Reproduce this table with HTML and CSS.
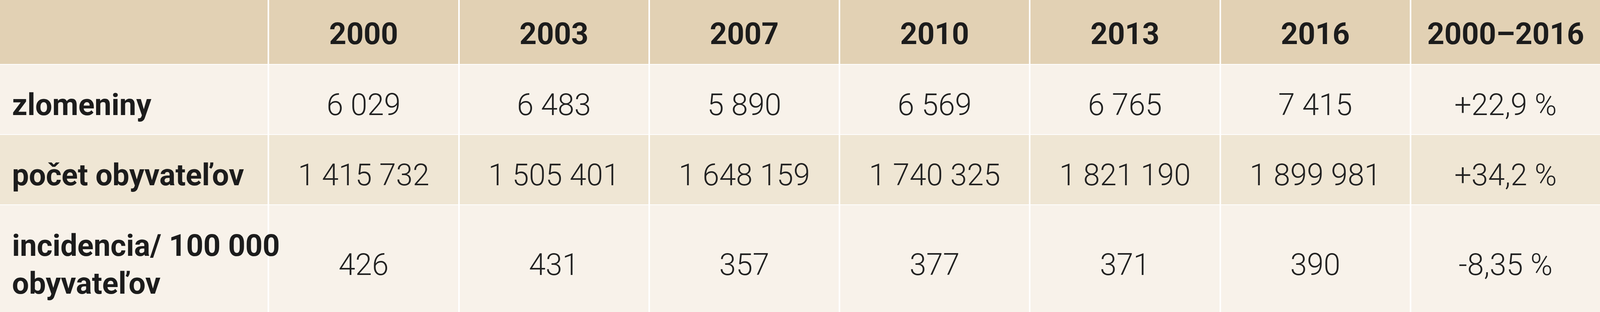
FILE: index.html
```html
<!DOCTYPE html>
<html lang="sk">
<head>
<meta charset="utf-8">
<title>Zlomeniny</title>
<link rel="stylesheet" href="styles.css">
</head>
<body>
<table class="data">
  <colgroup>
    <col class="c-label">
    <col class="c-val"><col class="c-val"><col class="c-val"><col class="c-val"><col class="c-val"><col class="c-val"><col class="c-val">
  </colgroup>
  <thead>
    <tr class="head">
      <th></th>
      <th>2000</th>
      <th>2003</th>
      <th>2007</th>
      <th>2010</th>
      <th>2013</th>
      <th>2016</th>
      <th>2000–2016</th>
    </tr>
  </thead>
  <tbody>
    <tr class="light">
      <th class="label">zlomeniny</th>
      <td>6 029</td>
      <td>6 483</td>
      <td>5 890</td>
      <td>6 569</td>
      <td>6 765</td>
      <td>7 415</td>
      <td>+22,9 %</td>
    </tr>
    <tr class="dark">
      <th class="label">počet obyvateľov</th>
      <td>1 415 732</td>
      <td>1 505 401</td>
      <td>1 648 159</td>
      <td>1 740 325</td>
      <td>1 821 190</td>
      <td>1 899 981</td>
      <td>+34,2 %</td>
    </tr>
    <tr class="light last">
      <th class="label">incidencia/ 100 000<br>obyvateľov</th>
      <td>426</td>
      <td>431</td>
      <td>357</td>
      <td>377</td>
      <td>371</td>
      <td>390</td>
      <td>-8,35 %</td>
    </tr>
  </tbody>
</table>
</body>
</html>
```
FILE: styles.css
```css
html, body {
  margin: 0;
  padding: 0;
  background: #ffffff;
}
body {
  width: 100%;
  height: 800px;
  overflow: hidden;
  font-family: Roboto, "Liberation Sans", sans-serif;
}
.data {
  width: 100%;
  table-layout: fixed;
  border-collapse: separate;
  border-spacing: 0;
  font-size: 77px;
  line-height: 95px;
  color: #1c1c1c;
}
.c-label { width: 16.73%; }

.data th,
.data td {
  text-align: center;
  vertical-align: middle;
  padding: 56px 0 27px 0;
  border-top: 2px solid #ffffff;
  border-left: 4px solid #ffffff;
  white-space: nowrap;
}
.data th:first-child,
.data td:first-child {
  border-left: 0;
}
.head th {
  background: #e2d1b4;
  font-weight: 700;
  padding: 40px 0 29px 0;
  border-top: 0;
}
.light th, .light td { background: #f8f2ea; }
.dark th, .dark td { background: #efe6d4; }

.data td {
  font-weight: 300;
  color: #222222;
}
.data .label {
  text-align: left;
  font-weight: 700;
  padding-left: 0.75%;
}
.last th, .last td {
  line-height: 97px;
  padding-bottom: 36px;
}
```
